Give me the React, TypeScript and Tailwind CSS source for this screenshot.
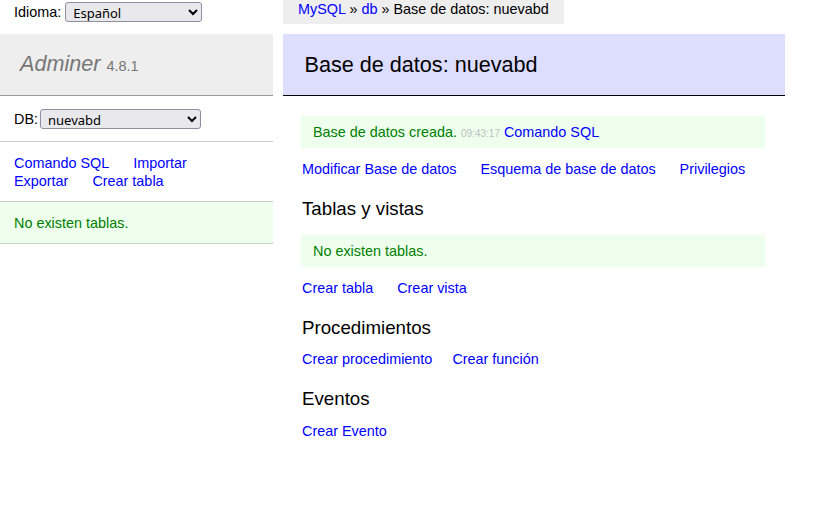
import React from "react";

/**
 * Adminer 4.8.1 — vista de base de datos recién creada.
 */
type LinkItem = string;

function Links({ items, className = "", gap = "mr-[20px]" }: { items: LinkItem[]; className?: string; gap?: string }) {
  return (
    <p className={className}>
      {items.map((t, i) => (
        <React.Fragment key={t}>
          <a href="#" className={`${gap} whitespace-nowrap text-[#0000ff]`}>
            {t}
          </a>
          {i < items.length - 1 ? " " : null}
        </React.Fragment>
      ))}
    </p>
  );
}

function Select({ value, className = "" }: { value: string; className?: string }) {
  return (
    <select
      defaultValue={value}
      className={`h-[20px] rounded-[3px] border border-[#8f8f9d] bg-[#e9e9ed] pl-[3px] font-['Noto_Sans',sans-serif] text-[13px] text-black ${className}`}
    >
      <option>{value}</option>
    </select>
  );
}

export default function App() {
  return (
    <div className="flex h-[506px] w-[830px] bg-white font-['Liberation_Sans',Arial,sans-serif] text-[14.4px] leading-[18px] text-black">
      {/* menú lateral */}
      <div className="w-[273px] shrink-0">
        <div className="flex h-[34px] items-start px-[14px] pt-[2px]">
          <div className="flex h-[20px] items-center gap-[4px]">
            <span>Idioma:</span>
            <Select value="Español" className="w-[137px]" />
          </div>
        </div>
        <h1 className="h-[62px] border-b border-[#999] bg-[#eee] pl-[20px] pt-[16px] text-[21.6px] leading-[27px] font-normal text-[#777]">
          <span className="italic">Adminer</span> <span className="text-[14.5px]">4.8.1</span>
        </h1>
        <div className="flex h-[46px] items-center gap-[2px] border-b border-[#ccc] px-[14px]">
          <span>DB:</span>
          <Select value="nuevabd" className="w-[161px]" />
        </div>
        <Links
          items={["Comando SQL", "Importar", "Exportar", "Crear tabla"]}
          className="border-b border-[#ccc] px-[14px] py-[11.5px]"
        />
        <p className="border-b border-[#ccc] bg-[#eeffee] px-[14px] py-[11.5px] text-[#008000]">No existen tablas.</p>
      </div>

      {/* contenido */}
      <div className="ml-[10px] w-[502px] shrink-0">
        <div className="h-[34px]">
          <div className="inline-block h-[24px] bg-[#eee] px-[15px] leading-[18px]">
            <a href="#" className="text-[#0000ff]">MySQL</a> » <a href="#" className="text-[#0000ff]">db</a> » Base de datos: nuevabd
          </div>
        </div>
        <h2 className="h-[62px] border-b border-black bg-[#ddddff] px-[21.6px] pt-[17px] text-[21.6px] leading-[27px] font-normal">
          Base de datos: nuevabd
        </h2>
        <div className="pl-[19px] pr-[20px]">
          <div className="-ml-[1px] mt-[20px] h-[32px] bg-[#eeffee] px-[12px] py-[7px] text-[#008000]">
            Base de datos creada. <span className="text-[10px] text-[#c0c0c0]">09:43:17</span>{" "}
            <a href="#" className="text-[#0000ff]">Comando SQL</a>
          </div>
          <Links
            items={["Modificar Base de datos", "Esquema de base de datos", "Privilegios"]}
            className="mt-[12px] whitespace-nowrap"
          />

          <h3 className="mt-[19px] text-[18.72px] leading-[23px] font-normal">Tablas y vistas</h3>
          <p className="-ml-[1px] mt-[15px] h-[32px] bg-[#eeffee] px-[12px] py-[7px] text-[#008000]">No existen tablas.</p>
          <Links items={["Crear tabla", "Crear vista"]} className="mt-[12px] whitespace-nowrap" />

          <h3 className="mt-[19px] text-[18.72px] leading-[23px] font-normal">Procedimientos</h3>
          <Links items={["Crear procedimiento", "Crear función"]} gap="mr-[16px]" className="mt-[11px] whitespace-nowrap" />

          <h3 className="mt-[19px] text-[18.72px] leading-[23px] font-normal">Eventos</h3>
          <Links items={["Crear Evento"]} className="mt-[12px] whitespace-nowrap" />
        </div>
      </div>
    </div>
  );
}
